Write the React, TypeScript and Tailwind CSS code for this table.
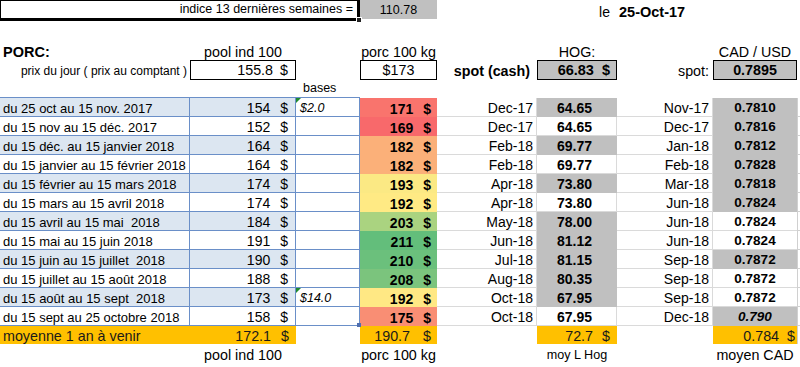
import React from 'react';

type Row = {
    label: string;
    pool: number;
    base?: string;
    porc: number;
    porcBg: string;
    hogMonth: string;
    hog: string;
    hogGray: boolean;
    cadMonth: string;
    cad: string;
    cadGray: boolean;
    cadItalic?: boolean;
};

const rows: Row[] = [
    { label: 'du 25 oct au 15 nov. 2017', pool: 154, base: '$2.0', porc: 171, porcBg: 'bg-[#f9746d]', hogMonth: 'Dec-17', hog: '64.65', hogGray: true, cadMonth: 'Nov-17', cad: '0.7810', cadGray: true },
    { label: 'du 15 nov au 15 déc. 2017', pool: 152, porc: 169, porcBg: 'bg-[#f8696b]', hogMonth: 'Dec-17', hog: '64.65', hogGray: false, cadMonth: 'Dec-17', cad: '0.7816', cadGray: true },
    { label: 'du 15 déc. au 15 janvier 2018', pool: 164, porc: 182, porcBg: 'bg-[#fbb079]', hogMonth: 'Feb-18', hog: '69.77', hogGray: true, cadMonth: 'Jan-18', cad: '0.7812', cadGray: true },
    { label: 'du 15 janvier au 15 février 2018', pool: 164, porc: 182, porcBg: 'bg-[#fbb079]', hogMonth: 'Feb-18', hog: '69.77', hogGray: false, cadMonth: 'Feb-18', cad: '0.7828', cadGray: true },
    { label: 'du 15 février au 15 mars 2018', pool: 174, porc: 193, porcBg: 'bg-[#fbe984]', hogMonth: 'Apr-18', hog: '73.80', hogGray: true, cadMonth: 'Mar-18', cad: '0.7818', cadGray: true },
    { label: 'du 15 mars au 15 avril 2018', pool: 174, porc: 192, porcBg: 'bg-[#ffea84]', hogMonth: 'Apr-18', hog: '73.80', hogGray: false, cadMonth: 'Jun-18', cad: '0.7824', cadGray: true },
    { label: 'du 15 avril au 15 mai  2018', pool: 184, porc: 203, porcBg: 'bg-[#aad380]', hogMonth: 'May-18', hog: '78.00', hogGray: true, cadMonth: 'Jun-18', cad: '0.7824', cadGray: false },
    { label: 'du 15 mai au 15 juin 2018', pool: 191, porc: 211, porcBg: 'bg-[#63be7b]', hogMonth: 'Jun-18', hog: '81.12', hogGray: true, cadMonth: 'Jun-18', cad: '0.7824', cadGray: false },
    { label: 'du 15 juin au 15 juillet  2018', pool: 190, porc: 210, porcBg: 'bg-[#6bc07c]', hogMonth: 'Jul-18', hog: '81.15', hogGray: true, cadMonth: 'Sep-18', cad: '0.7872', cadGray: true },
    { label: 'du 15 juillet au 15 août 2018', pool: 188, porc: 208, porcBg: 'bg-[#7bc47d]', hogMonth: 'Aug-18', hog: '80.35', hogGray: true, cadMonth: 'Sep-18', cad: '0.7872', cadGray: false },
    { label: 'du 15 août au 15 sept  2018', pool: 173, base: '$14.0', porc: 192, porcBg: 'bg-[#ffe884]', hogMonth: 'Oct-18', hog: '67.95', hogGray: true, cadMonth: 'Sep-18', cad: '0.7872', cadGray: false },
    { label: 'du 15 sept au 25 octobre 2018', pool: 158, porc: 175, porcBg: 'bg-[#f98e74]', hogMonth: 'Oct-18', hog: '67.95', hogGray: false, cadMonth: 'Dec-18', cad: '0.790', cadGray: true, cadItalic: true },
];

function GreenFlag() {
    return (
        <svg className="absolute left-0 top-0" width="5" height="5" viewBox="0 0 5 5">
            <polygon points="0,0 5,0 0,5" fill="#1e8a2e" />
        </svg>
    );
}

export default function App() {
    return (
        <div className="w-[800px] h-[367px] overflow-hidden bg-white text-black font-['Liberation_Sans',Arial,sans-serif]">
            <div className="grid grid-cols-[190px_106px_64px_77px_100px_80px_96px_84px_3px]">
                {/* indice row */}
                <div className="col-span-3 h-[21px] relative flex items-end justify-end pr-[4px] pb-[1px] border-l border-t border-r-[3px] border-b-[3px] border-black text-[12.5px] leading-[15px]">
                    indice 13 dernières semaines =
                    <div className="absolute -right-[5px] -bottom-[5px] w-[6px] h-[6px] bg-[#222] border border-white" />
                </div>
                <div className="h-[19px] bg-[#c0c0c0] flex items-end justify-center text-[12.5px] leading-[15px] pb-[1px]">110.78</div>
                <div />
                <div className="flex items-end justify-end pr-[7px] pb-[1px] text-[14px] leading-[16px]">le</div>
                <div className="flex items-end pl-[2px] pb-[1px] text-[14.5px] leading-[16px] font-bold">25-Oct-17</div>
                <div />
                <div />

                {/* blank */}
                <div className="col-span-9 h-[21px]" />

                {/* header row */}
                <div className="h-[18px] flex items-end pl-[3px] text-[14.5px] leading-[16px] font-bold">PORC:</div>
                <div className="flex items-end justify-center text-[14.3px] leading-[16px]">pool ind 100</div>
                <div />
                <div className="flex items-end justify-center text-[14.3px] leading-[16px] whitespace-nowrap">porc 100 kg</div>
                <div />
                <div className="flex items-end justify-center text-[14.3px] leading-[16px]">HOG:</div>
                <div />
                <div className="flex items-end justify-center text-[14.3px] leading-[16px] whitespace-nowrap">CAD / USD</div>
                <div />

                {/* prix du jour row */}
                <div className="h-[20px] flex items-end justify-end pr-[3px] pb-[2px] text-[12px] leading-[14px] whitespace-nowrap">prix du jour ( prix au comptant )</div>
                <div className="flex items-end justify-end pr-[7px] pb-[1px] border border-black text-[14.3px] leading-[16px]">
                    <span>155.8</span>
                    <span className="ml-[7px]">$</span>
                </div>
                <div />
                <div className="flex items-end justify-center pb-[1px] border border-black text-[14.3px] leading-[16px]">$173</div>
                <div className="flex items-end justify-end pr-[7px] pb-[1px] text-[14.3px] leading-[16px] font-bold whitespace-nowrap">spot (cash)</div>
                <div className="flex items-end justify-end pr-[6px] pb-[1px] border border-black bg-[#c0c0c0] text-[14.5px] leading-[16px] font-bold">
                    <span>66.83</span>
                    <span className="ml-[8px]">$</span>
                </div>
                <div className="flex items-end justify-end pr-[4px] pb-[1px] text-[14.3px] leading-[16px]">spot:</div>
                <div className="flex items-end justify-center pb-[1px] border border-black bg-[#c0c0c0] text-[14.3px] leading-[16px] font-bold">0.7895</div>
                <div />

                {/* bases row */}
                <div className="h-[18px] border-b border-[#6a8fc8]" />
                <div className="border-b border-[#6a8fc8]" />
                <div className="flex items-end pl-[7px] pb-[2px] border-b border-[#6a8fc8] text-[12.5px] leading-[14px]">bases</div>
                <div />
                <div />
                <div />
                <div />
                <div />
                <div />

                {/* monthly rows */}
                {rows.map((r, i) => {
                    const shaded = i % 2 === 0;
                    const last = i === rows.length - 1;
                    return (
                        <React.Fragment key={i}>
                            <div className={`h-[19px] flex items-end pl-[3px] border-r border-b border-[#6a8fc8] whitespace-pre text-[13px] leading-[15px] ${shaded ? 'bg-[#dce6f1]' : 'bg-white'}`}>
                                {r.label}
                            </div>
                            <div className={`flex items-end justify-end pr-[7px] border-r border-b border-[#6a8fc8] text-[14px] leading-[16px] ${shaded ? 'bg-[#dce6f1]' : 'bg-white'}`}>
                                <span>{r.pool}</span>
                                <span className="ml-[10px]">$</span>
                            </div>
                            <div className="relative flex items-end pl-[4px] border-r border-b border-[#6a8fc8] italic text-[12.5px] leading-[15px]">
                                {r.base && <GreenFlag />}
                                {r.base}
                                {last && <div className="absolute -right-[2px] -bottom-[2px] w-[4px] h-[4px] bg-[#4f6fb0]" />}
                            </div>
                            <div className={`flex items-end justify-end pr-[6px] font-bold text-[14px] leading-[16px] ${r.porcBg}`}>
                                <span>{r.porc}</span>
                                <span className="ml-[10px]">$</span>
                            </div>
                            <div className="flex items-end justify-end pr-[3px] border-r border-b border-[#dadada] text-[14px] leading-[16px]">
                                {r.hogMonth}
                            </div>
                            <div className={`flex items-end justify-center pr-[4px] border-r border-b font-bold text-[14px] leading-[16px] ${r.hogGray ? 'bg-[#c0c0c0] border-[#c0c0c0]' : 'bg-white border-[#dadada]'}`}>
                                {r.hog}
                            </div>
                            <div className="flex items-end justify-end pr-[3px] border-r border-b border-[#dadada] text-[14px] leading-[16px]">
                                {r.cadMonth}
                            </div>
                            <div className={`flex items-end justify-center border-b font-bold text-[13.5px] leading-[16px] ${r.cadItalic ? 'italic' : ''} ${r.cadGray ? 'bg-[#c0c0c0] border-[#c0c0c0]' : 'bg-white border-[#dadada]'}`}>
                                {r.cad}
                            </div>
                            <div className="border-l border-b border-[#d0d0d0]" />
                        </React.Fragment>
                    );
                })}

                {/* moyenne row */}
                <div className="h-[18px] flex items-end pl-[3px] bg-[#ffc000] text-[14.3px] leading-[16px] text-[#1a1a1a]">moyenne 1 an à venir</div>
                <div className="flex items-end justify-end pr-[7px] bg-[#ffc000] text-[14.3px] leading-[16px] text-[#1a1a1a]">
                    <span>172.1</span>
                    <span className="ml-[10px]">$</span>
                </div>
                <div />
                <div className="flex items-end justify-end pr-[6px] bg-[#ffc000] text-[14.3px] leading-[16px] text-[#1a1a1a]">
                    <span>190.7</span>
                    <span className="ml-[13px]">$</span>
                </div>
                <div />
                <div className="flex items-end justify-end pr-[7px] bg-[#ffc000] text-[14.3px] leading-[16px] text-[#1a1a1a]">
                    <span>72.7</span>
                    <span className="ml-[9px]">$</span>
                </div>
                <div />
                <div className="flex items-end justify-end pr-[2px] bg-[#ffc000] text-[14.3px] leading-[16px] text-[#1a1a1a]">
                    <span>0.784</span>
                    <span className="ml-[8px]">$</span>
                </div>
                <div className="border-l border-[#d0d0d0]" />

                {/* footer labels */}
                <div className="h-[22px]" />
                <div className="flex items-end justify-center pb-[3px] text-[14.3px] leading-[16px]">pool ind 100</div>
                <div />
                <div className="flex items-end justify-center pb-[3px] text-[14.3px] leading-[16px] whitespace-nowrap">porc 100 kg</div>
                <div />
                <div className="flex items-end justify-center pb-[3px] text-[12.6px] leading-[15px] whitespace-nowrap">moy L Hog</div>
                <div />
                <div className="flex items-end justify-center pb-[3px] text-[14.3px] leading-[16px] whitespace-nowrap">moyen CAD</div>
                <div />
            </div>
        </div>
    );
}
